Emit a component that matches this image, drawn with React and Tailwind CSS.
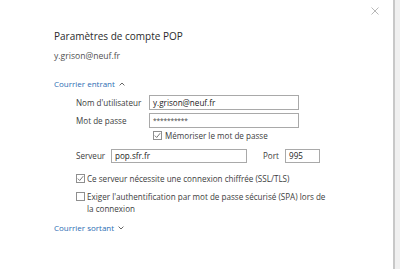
import React from "react";

function Check({ checked }) {
  return (
    <span className="flex h-[9px] w-[9px] shrink-0 items-center justify-center border border-[#8f8f8f] bg-white">
      {checked && (
        <svg width="7" height="7" viewBox="0 0 7 7" fill="none">
          <path d="M0.8 3.6 L2.7 5.5 L6.2 1.2" stroke="#6b6b6b" strokeWidth="0.9" />
        </svg>
      )}
    </span>
  );
}

export default function App() {
  return (
    <div className="flex h-[269px] w-[400px] bg-white font-['Open_Sans','Noto_Sans',sans-serif] text-[#3d3d3d]">
      <div className="relative flex flex-1 flex-col pl-[54px] pt-[29px]">
        <button className="absolute right-[14px] top-[7px] h-[8px] w-[8px]">
          <svg width="8" height="8" viewBox="0 0 8 8">
            <path d="M0.5 0.5 L7.5 7.5 M7.5 0.5 L0.5 7.5" stroke="#b0b0b0" strokeWidth="0.9" />
          </svg>
        </button>
        <h1 className="h-[14px] text-[10px] leading-[14px] text-[#2b2b2b]">Paramètres de compte POP</h1>
        <div className="mt-[8px] text-[8.6px] leading-[10px] text-[#505050]">y.grison@neuf.fr</div>
        <div className="mt-[18px] flex h-[10px] items-center gap-[4px] text-[8px] leading-[10px] text-[#2d6db3]">
          <span>Courrier entrant</span>
          <svg width="6" height="4" viewBox="0 0 6 4">
            <path d="M0.6 3.4 L3 1 L5.4 3.4" stroke="#555" strokeWidth="0.9" fill="none" />
          </svg>
        </div>
        <div className="ml-[22px] mt-[6px] flex flex-col text-[8.1px] leading-[10px]">
          <div className="flex h-[15px] items-center">
            <span className="w-[73px]">Nom d'utilisateur</span>
            <div className="flex h-[15px] w-[150px] items-center border border-[#a9a9a9] px-[3px] text-[#222]">y.grison@neuf.fr</div>
          </div>
          <div className="mt-[3px] flex h-[15px] items-center">
            <span className="w-[73px]">Mot de passe</span>
            <div className="flex h-[15px] w-[150px] items-center border border-[#a9a9a9] px-[3px] text-[6.5px] tracking-[-0.1px] text-[#444]">**********</div>
          </div>
          <div className="mt-[3px] flex h-[9px] items-center gap-[3px] pl-[77px]">
            <Check checked />
            <span>Mémoriser le mot de passe</span>
          </div>
          <div className="mt-[9px] flex h-[14px] items-center">
            <span className="w-[35px]">Serveur</span>
            <div className="flex h-[14px] w-[136px] items-center border border-[#a9a9a9] px-[3px] text-[#222]">pop.sfr.fr</div>
            <span className="ml-[16px] w-[22px]">Port</span>
            <div className="flex h-[14px] w-[35px] items-center border border-[#a9a9a9] px-[3px] text-[#222]">995</div>
          </div>
          <div className="mt-[11px] flex h-[9px] items-center gap-[2px]">
            <Check checked />
            <span>Ce serveur nécessite une connexion chiffrée (SSL/TLS)</span>
          </div>
          <div className="mt-[9px] flex items-start gap-[2px]">
            <Check />
            <span className="-mt-[1px] leading-[11.5px]">
              Exiger l'authentification par mot de passe sécurisé (SPA) lors de
              <br />
              la connexion
            </span>
          </div>
        </div>
        <div className="mt-[9px] flex h-[10px] items-center gap-[4px] text-[8px] leading-[10px] text-[#2d6db3]">
          <span>Courrier sortant</span>
          <svg width="6" height="4" viewBox="0 0 6 4">
            <path d="M0.6 0.6 L3 3 L5.4 0.6" stroke="#555" strokeWidth="0.9" fill="none" />
          </svg>
        </div>
      </div>
      <div className="w-[7px] border-l-2 border-[#c8c8c8] bg-[#f0f0f0]" />
    </div>
  );
}
